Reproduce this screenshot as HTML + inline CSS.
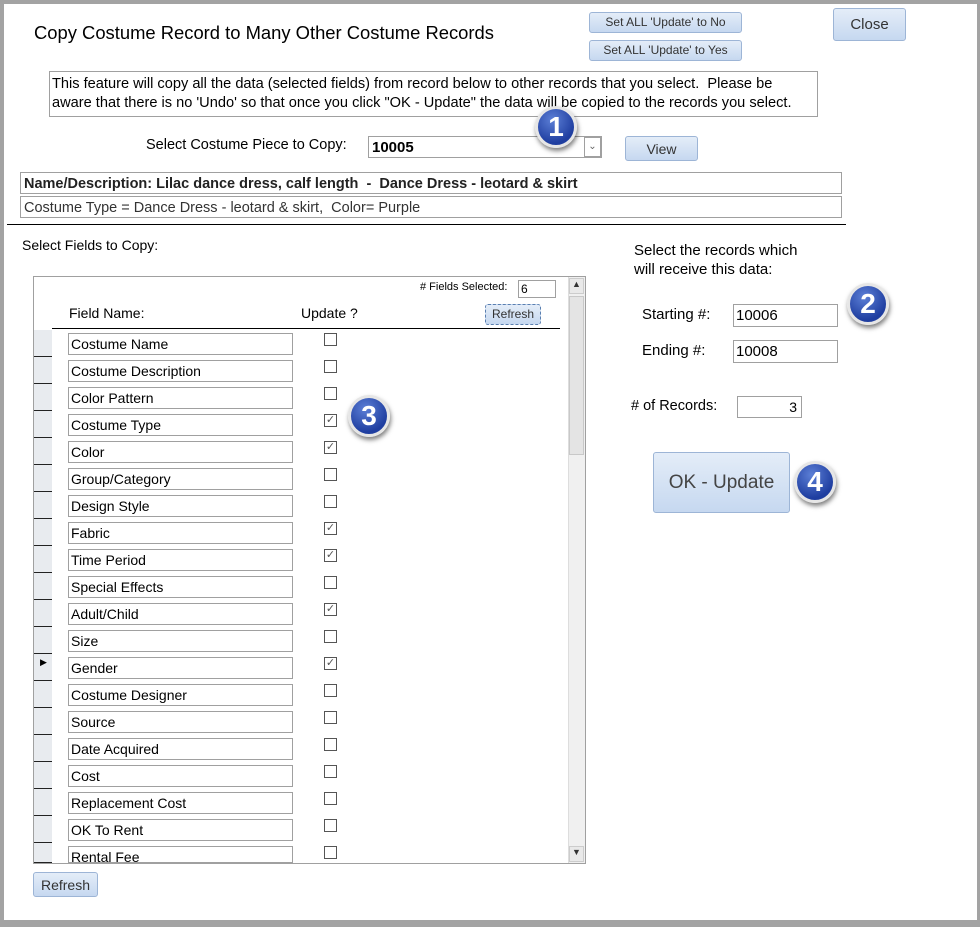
<!DOCTYPE html>
<html><head><style>
*{box-sizing:border-box;margin:0;padding:0}
body{width:980px;height:927px;background:#a3a3a3;position:relative;overflow:hidden;font-family:"Liberation Sans",sans-serif;color:#000}
#pg{position:absolute;left:4px;top:4px;width:973px;height:916px;background:#fff}
.a{position:absolute;white-space:nowrap}
.btn{position:absolute;border:1px solid #9db5d6;border-radius:3px;background:linear-gradient(#e4edf8,#c6d8f0);color:#333;text-align:center;font-size:13px}
.box{position:absolute;border:1px solid #a0a0a0;background:#fff}
.fld{position:absolute;left:68px;width:225px;height:22px;border:1px solid #a0a0a0;font-size:14px;padding:2px 0 0 2px}
.cb{position:absolute;left:324px;width:13px;height:13px;border:1px solid #555;background:#fff;font-size:11px;line-height:11px;text-align:center;color:#555}
.sel{position:absolute;left:34px;width:18px;height:27px;background:#e8ebef;border-bottom:1px solid #222}
.num{position:absolute;width:42px;height:42px;border-radius:50%;background:radial-gradient(circle at 40% 30%,#5c7fd6,#1f3ea0 70%);border:3px solid #e6e6e6;box-shadow:1px 3px 5px rgba(0,0,0,.5);color:#fff;font-weight:bold;font-size:28px;text-align:center;line-height:36px}
</style></head><body>
<div id="pg"></div>
<div class="a" style="left:34px;top:22px;font-size:18.4px">Copy Costume Record to Many Other Costume Records</div>
<div class="btn" style="left:589px;top:12px;width:153px;height:21px;line-height:19px;font-size:12px">Set ALL 'Update' to No</div>
<div class="btn" style="left:589px;top:40px;width:153px;height:21px;line-height:19px;font-size:12px">Set ALL 'Update' to Yes</div>
<div class="btn" style="left:833px;top:8px;width:73px;height:33px;line-height:31px;font-size:15px">Close</div>
<div class="box" style="left:49px;top:71px;width:769px;height:46px;font-size:14.6px;padding:3px 0 0 2px;line-height:19px;overflow:hidden">This feature will copy all the data (selected fields) from record below to other records that you select.&nbsp; Please be<br>aware that there is no 'Undo' so that once you click "OK - Update" the data will be copied to the records you select.</div>
<div class="a" style="left:146px;top:137px;font-size:14.5px">Select Costume Piece to Copy:</div>
<div class="box" style="left:368px;top:136px;width:234px;height:22px;font-size:15px;font-weight:bold;padding:2px 3px">10005</div>
<div class="box" style="left:584px;top:137px;width:17px;height:20px;font-size:10px;text-align:center;color:#666;line-height:18px">⌄</div>
<div class="btn" style="left:625px;top:136px;width:73px;height:25px;line-height:24px;font-size:14px">View</div>
<div class="num" style="left:535px;top:106px">1</div>
<div class="box" style="left:20px;top:172px;width:822px;height:22px;font-size:14.5px;font-weight:bold;padding:3px 3px;color:#222">Name/Description: Lilac dance dress, calf length &nbsp;- &nbsp;Dance Dress - leotard &amp; skirt</div>
<div class="box" style="left:20px;top:196px;width:822px;height:22px;font-size:14.5px;padding:3px 3px;color:#333">Costume Type = Dance Dress - leotard &amp; skirt,&nbsp; Color= Purple</div>
<div class="a" style="left:7px;top:224px;width:839px;height:1px;background:#000"></div>
<div class="a" style="left:22px;top:237px;font-size:14px">Select Fields to Copy:</div>
<div class="box" style="left:33px;top:276px;width:553px;height:588px;overflow:hidden"></div>
<div class="a" style="left:420px;top:281px;font-size:11px">#&nbsp;Fields Selected:</div>
<div class="box" style="left:518px;top:280px;width:38px;height:18px;font-size:12px;padding:1px 2px">6</div>
<div class="a" style="left:69px;top:305px;font-size:14px">Field Name:</div>
<div class="a" style="left:301px;top:305px;font-size:14px">Update ?</div>
<div class="btn" style="left:485px;top:304px;width:56px;height:21px;line-height:19px;font-size:12px;border:1px dashed #5a7fb0">Refresh</div>
<div class="a" style="left:52px;top:328px;width:508px;height:1px;background:#000"></div>
<div class="a" style="left:568px;top:277px;width:17px;height:586px;background:#f0f0f0;border-left:1px solid #ddd"></div>
<div class="a" style="left:569px;top:278px;width:15px;height:16px;font-size:9px;text-align:center;color:#333;background:#e9e9e9;border:1px solid #ccc">▲</div>
<div class="a" style="left:569px;top:296px;width:15px;height:159px;background:#e4e4e4;border:1px solid #c8c8c8"></div>
<div class="a" style="left:569px;top:846px;width:15px;height:16px;font-size:9px;text-align:center;color:#333;background:#e9e9e9;border:1px solid #ccc">▼</div>
<div id="rows"></div>
<div class="btn" style="left:33px;top:872px;width:65px;height:25px;line-height:24px;font-size:14px">Refresh</div>
<div class="a" style="left:634px;top:241px;font-size:15px;line-height:19px">Select the records which<br>will receive this data:</div>
<div class="a" style="left:642px;top:306px;font-size:15px">Starting #:</div>
<div class="box" style="left:733px;top:304px;width:105px;height:23px;font-size:15px;padding:2px 2px">10006</div>
<div class="a" style="left:642px;top:342px;font-size:15px">Ending #:</div>
<div class="box" style="left:733px;top:340px;width:105px;height:23px;font-size:15px;padding:2px 2px">10008</div>
<div class="a" style="left:631px;top:398px;font-size:14.5px"># of Records:</div>
<div class="box" style="left:737px;top:396px;width:65px;height:22px;font-size:14px;padding:2px 4px;text-align:right">3</div>
<div class="btn" style="left:653px;top:452px;width:137px;height:61px;line-height:59px;font-size:19px;color:#444">OK - Update</div>
<div class="num" style="left:847px;top:283px">2</div>
<div class="num" style="left:348px;top:395px">3</div>
<div class="num" style="left:794px;top:461px">4</div>
<div class="a" style="left:40px;top:657px;font-size:9px">▶</div>
<script>
var n=["Costume Name","Costume Description","Color Pattern","Costume Type","Color","Group/Category","Design Style","Fabric","Time Period","Special Effects","Adult/Child","Size","Gender","Costume Designer","Source","Date Acquired","Cost","Replacement Cost","OK To Rent","Rental Fee"];
var c=[0,0,0,1,1,0,0,1,1,0,1,0,1,0,0,0,0,0,0,0];
var h="";
for(var i=0;i<n.length;i++){var y=330+i*27;
var sh=Math.min(27,863-y);
h+='<div class="sel" style="top:'+y+'px;height:'+sh+'px"></div>';
h+='<div class="fld" style="top:'+(y+3)+'px;height:'+Math.min(22,863-y-3)+'px;overflow:hidden">'+n[i]+'</div>';
h+='<div class="cb" style="top:'+(y+3)+'px">'+(c[i]?'✓':'')+'</div>';}
document.getElementById('rows').innerHTML=h;
</script>
</body></html>
